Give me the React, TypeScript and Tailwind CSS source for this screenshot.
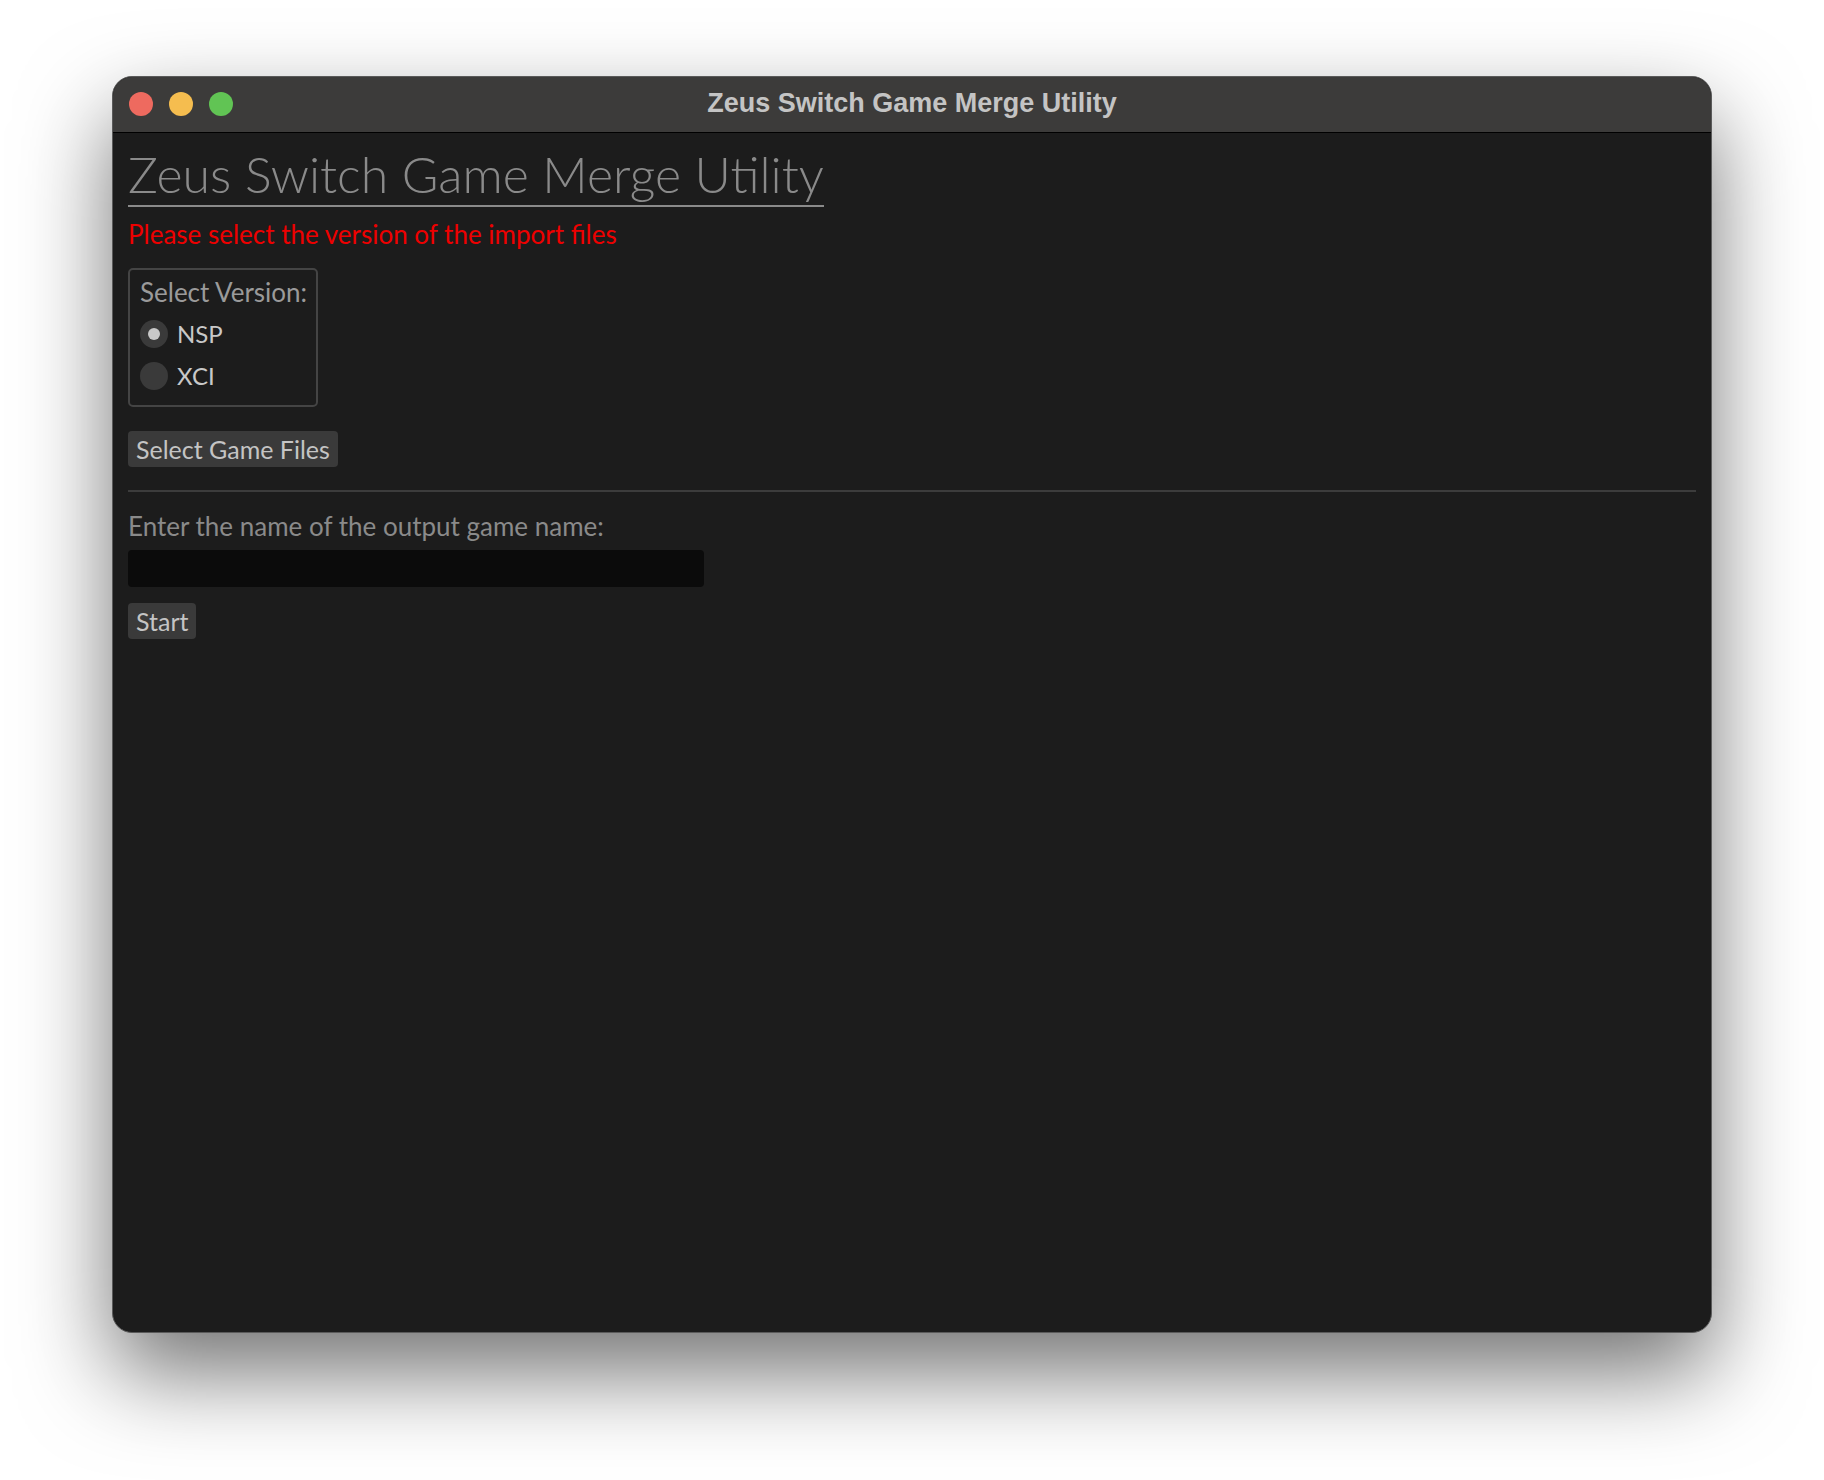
import { useState } from "react";

const font = { fontFamily: "Lato, 'Open Sans', sans-serif" };

function Radio({ label, checked, onClick }: { label: string; checked: boolean; onClick: () => void }) {
  return (
    <button onClick={onClick} className="flex items-center gap-[9px] h-[42px]">
      <span className="w-[28px] h-[28px] rounded-full bg-[#3a3a3a] flex items-center justify-center">
        {checked && <span className="w-[12px] h-[12px] rounded-full bg-[#c8c8c8]" />}
      </span>
      <span className="text-[24px] text-[#c8c8c8]">{label}</span>
    </button>
  );
}

export default function App() {
  const [version, setVersion] = useState("NSP");
  const [name, setName] = useState("");

  return (
    <div className="w-[1824px] h-[1480px] bg-white pl-[112px] pt-[76px]" style={font}>
      <div className="w-[1600px] h-[1257px] rounded-[20px] overflow-hidden border border-[#5a5a5a] bg-[#1c1c1c] shadow-[0_40px_90px_rgba(0,0,0,0.55)] flex flex-col">
        {/* title bar */}
        <div className="h-[56px] bg-[#3c3b3a] border-b border-black relative flex items-center justify-center shrink-0">
          <div className="absolute left-[16px] top-[15px] flex gap-[16px]">
            <span className="w-[24px] h-[24px] rounded-full bg-[#ee6a5f]" />
            <span className="w-[24px] h-[24px] rounded-full bg-[#f5bd4f]" />
            <span className="w-[24px] h-[24px] rounded-full bg-[#61c454]" />
          </div>
          <span className="text-[27px] font-bold text-[#c4c4c4] -mt-[2px]" style={{ fontFamily: "'Liberation Sans', Arial, sans-serif" }}>
            Zeus Switch Game Merge Utility
          </span>
        </div>

        {/* content */}
        <div className="flex-1 px-[15px] pt-[10px]">
          <h1 className="inline-block text-[50px] font-light leading-[62px] text-[#8a8a8a] border-b-2 border-[#8a8a8a]">
            Zeus Switch Game Merge Utility
          </h1>
          <p className="text-[#ee0000] text-[26px] leading-[30px] mt-[12px]">Please select the version of the import files</p>

          <div className="mt-[19px] w-[190px] border-2 border-[#444] rounded-[5px] px-[10px] pt-[6px] pb-[8px]">
            <div className="whitespace-nowrap text-[26px] leading-[32px] text-[#9a9a9a] mb-[5px]">Select Version:</div>
            <Radio label="NSP" checked={version === "NSP"} onClick={() => setVersion("NSP")} />
            <Radio label="XCI" checked={version === "XCI"} onClick={() => setVersion("XCI")} />
          </div>

          <button className="mt-[24px] h-[36px] px-[8px] rounded-[4px] bg-[#3a3a3a] text-[25px] leading-[36px] text-[#c4c4c4]">
            Select Game Files
          </button>

          <div className="mt-[23px] h-[2px] bg-[#3c3c3c]" />

          <div className="mt-[19px] text-[26px] leading-[30px] text-[#8a8a8a]">Enter the name of the output game name:</div>
          <input
            value={name}
            onChange={e => setName(e.target.value)}
            className="block mt-[9px] w-[576px] h-[37px] rounded-[4px] bg-[#0b0b0b] outline-none px-2 text-[#ccc] text-[22px]"
          />
          <button className="block mt-[16px] h-[36px] px-[8px] rounded-[4px] bg-[#3a3a3a] text-[25px] leading-[36px] text-[#c4c4c4]">
            Start
          </button>
        </div>
      </div>
    </div>
  );
}
